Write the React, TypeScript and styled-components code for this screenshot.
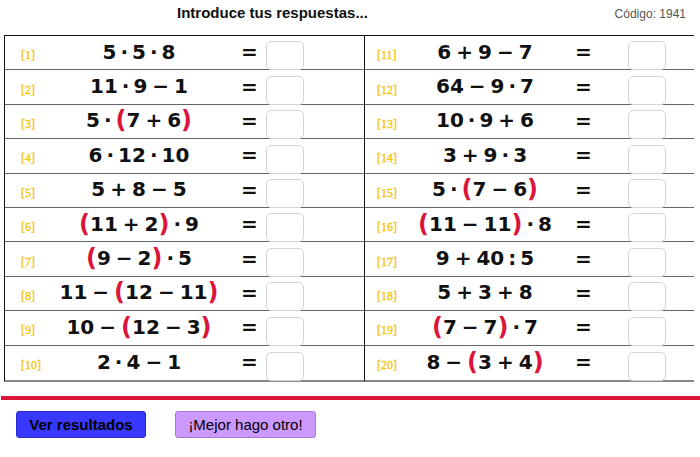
import * as React from 'react';
import styled, { createGlobalStyle } from 'styled-components';

const GlobalStyle = createGlobalStyle`
  html, body {
    margin: 0;
    padding: 0;
    background: #ffffff;
    font-family: "Liberation Sans", Arial, sans-serif;
  }
`;

const Page = styled.div`
  width: 700px;
  height: 457px;
  overflow: hidden;
  background: #fff;
`;

const Header = styled.div`
  height: 35px;
  display: flex;
  align-items: center;
  padding-left: 177px;
  padding-right: 14px;
  box-sizing: border-box;
`;

const Title = styled.div`
  font-weight: bold;
  font-size: 15px;
  color: #111;
  margin-top: -10px;
`;

const Code = styled.div`
  margin-left: auto;
  font-size: 12px;
  color: #555;
  margin-top: -8px;
`;

const Table = styled.div`
  display: flex;
  margin-left: 4px;
  width: 690px;
`;

const Column = styled.div<{ $right?: boolean }>`
  width: ${(p) => (p.$right ? '330px' : '360px')};
  border-top: 1px solid #111;
  border-bottom: 2px solid #888;
  border-left: 1px solid #111;
  box-sizing: border-box;
`;

const Row = styled.div<{ $right?: boolean }>`
  height: 34.4px;
  box-sizing: border-box;
  display: grid;
  grid-template-columns: ${(p) =>
    p.$right ? '12px 24px 168px 29px 30px 38px' : '16px 24px 188px 33px 0px 38px'};
  align-items: center;
  border-bottom: 1px solid #666;
  &:last-child {
    border-bottom: none;
  }
`;

const Label = styled.span`
  grid-column: 2;
  font-family: "Liberation Serif", "Times New Roman", serif;
  font-size: 12px;
  color: #f7c600;
  padding-top: 6px;
  -webkit-text-stroke: 0.35px #f7c600;
`;

const Expr = styled.div`
  grid-column: 3;
  text-align: center;
  font-family: "DejaVu Sans", sans-serif;
  font-weight: bold;
  font-size: 20px;
  line-height: 24px;
  color: #111;
  white-space: nowrap;
  margin-top: -2px;
`;

const Op = styled.span<{ $narrow?: boolean }>`
  margin: 0 ${(p) => (p.$narrow ? '4px' : '5px')};
`;

const Paren = styled.span`
  color: #dc143c;
  font-size: 24px;
  line-height: 0;
  vertical-align: -1px;
`;

const Eq = styled.span`
  grid-column: 4;
  text-align: center;
  font-family: "DejaVu Sans", sans-serif;
  font-weight: bold;
  font-size: 20px;
  color: #111;
  margin-top: -1px;
`;

const AnswerBox = styled.div`
  grid-column: 6;
  align-self: end;
  width: 38px;
  height: 29px;
  box-sizing: border-box;
  border: 1px solid #d4d4d4;
  border-radius: 5px;
  background: #fff;
  margin-bottom: -1px;
`;

const Divider = styled.div`
  height: 4px;
  background: #dc143c;
  margin-top: 14px;
  margin-left: 1px;
`;

const ButtonBar = styled.div`
  display: flex;
  gap: 29px;
  padding-left: 16px;
  margin-top: 11px;
`;

const Button = styled.button<{ $primary?: boolean }>`
  height: 27px;
  padding: 0 8px;
  font-family: "Liberation Sans", Arial, sans-serif;
  font-size: 15px;
  font-weight: ${(p) => (p.$primary ? 'bold' : 'normal')};
  color: #000;
  background: ${(p) => (p.$primary ? '#3838ff' : '#cc99ff')};
  border: 1px solid ${(p) => (p.$primary ? '#2a2ad0' : '#a87ad8')};
  border-radius: 3px;
  width: ${(p) => (p.$primary ? '130px' : '141px')};
`;

const left = ['5·5·8', '11·9−1', '5·(7+6)', '6·12·10', '5+8−5', '(11+2)·9', '(9−2)·5', '11−(12−11)', '10−(12−3)', '2·4−1'];
const right = ['6+9−7', '64−9·7', '10·9+6', '3+9·3', '5·(7−6)', '(11−11)·8', '9+40:5', '5+3+8', '(7−7)·7', '8−(3+4)'];

function renderExpr(expr: string) {
  const out: React.ReactNode[] = [];
  let num = '';
  const flush = () => {
    if (num) {
      out.push(num);
      num = '';
    }
  };
  expr.split('').forEach((ch, i) => {
    if (/[0-9]/.test(ch)) {
      num += ch;
      return;
    }
    flush();
    if (ch === '(' || ch === ')') {
      out.push(<Paren key={i}>{ch}</Paren>);
    } else {
      out.push(
        <Op key={i} $narrow={ch === '·' || ch === ':'}>
          {ch}
        </Op>
      );
    }
  });
  flush();
  return out;
}

const App: React.FC = () => {
  return (
    <Page>
      <GlobalStyle />
      <Header>
        <Title>Introduce tus respuestas...</Title>
        <Code>Código: 1941</Code>
      </Header>
      <Table>
        <Column>
          {left.map((e, i) => (
            <Row key={e}>
              <Label>[{i + 1}]</Label>
              <Expr>{renderExpr(e)}</Expr>
              <Eq>=</Eq>
              <AnswerBox />
            </Row>
          ))}
        </Column>
        <Column $right>
          {right.map((e, i) => (
            <Row key={e} $right>
              <Label>[{i + 11}]</Label>
              <Expr>{renderExpr(e)}</Expr>
              <Eq>=</Eq>
              <AnswerBox />
            </Row>
          ))}
        </Column>
      </Table>
      <Divider />
      <ButtonBar>
        <Button $primary>Ver resultados</Button>
        <Button>¡Mejor hago otro!</Button>
      </ButtonBar>
    </Page>
  );
};

export default App;
